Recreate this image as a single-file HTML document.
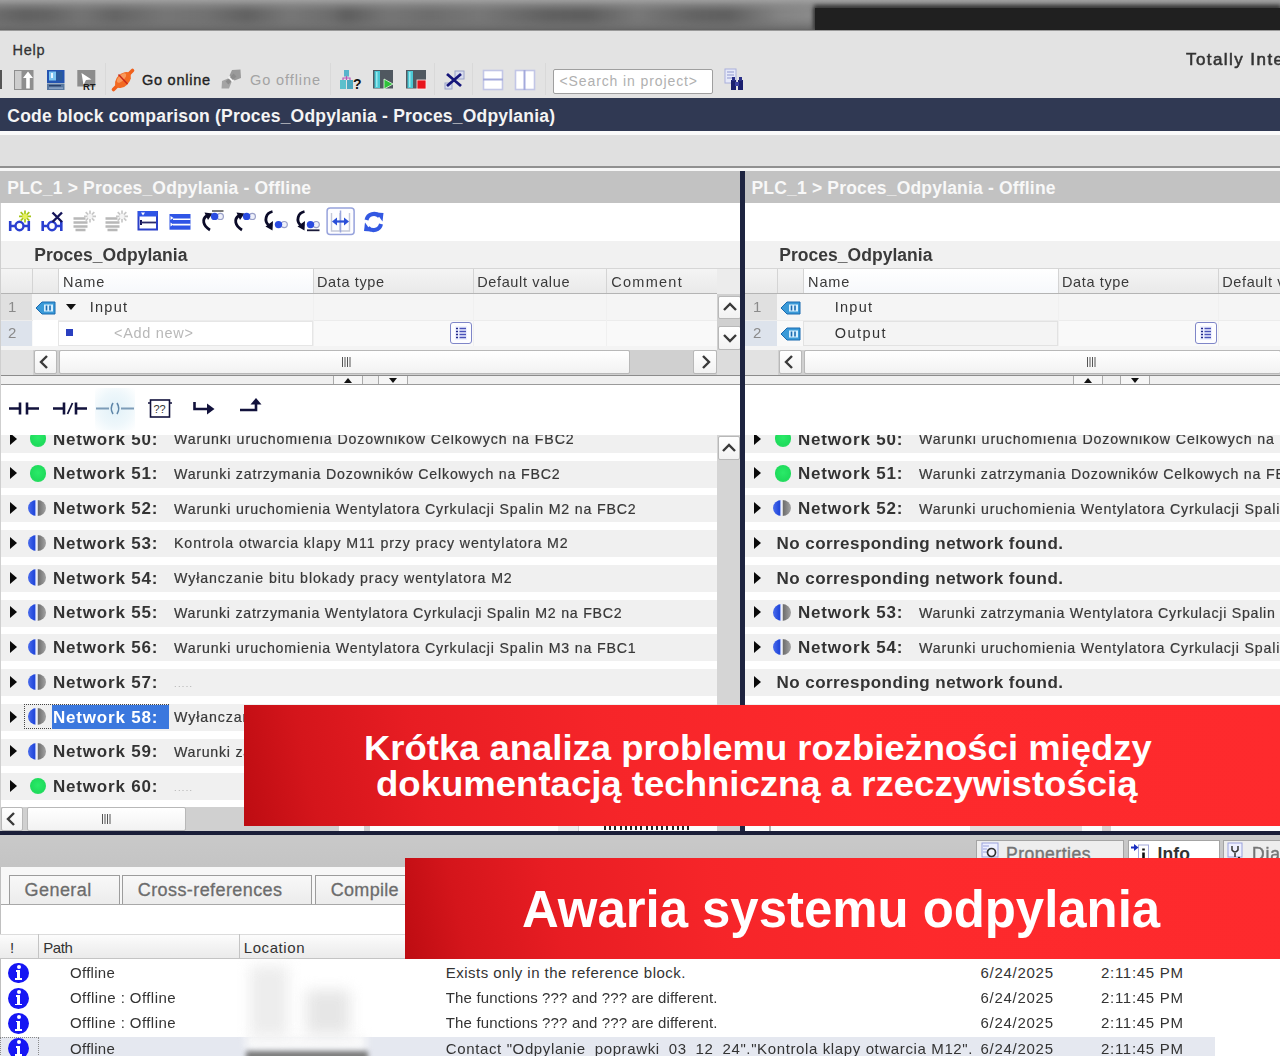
<!DOCTYPE html>
<html><head><meta charset="utf-8">
<style>
*{box-sizing:border-box;margin:0;padding:0}
html,body{width:1280px;height:1056px;overflow:hidden;background:#e4e4e4;font-family:"Liberation Sans",sans-serif;color:#2a2a2a}
.a{position:absolute}
.t{position:absolute;white-space:nowrap;line-height:1}
#root{position:relative;width:1280px;height:1056px;overflow:hidden}
.tk{-webkit-text-stroke:.3px currentColor}
svg{position:absolute;overflow:visible}
#ui{position:absolute;left:0;top:0;width:1280px;height:1056px;filter:blur(.5px)}
</style></head><body><div id="root"><div id="ui">
<div class="a" style="left:0px;top:0px;width:1280px;height:30.5px;background:linear-gradient(180deg,#a0a0a0 0,#8c8c8c 18%,#787878 40%,#727272 80%,#686868 94%,#565656 100%);"></div>
<div class="a" style="left:-10px;top:7px;width:830px;height:16px;filter:blur(5px);opacity:.8;background:linear-gradient(90deg,#6c6c6c 0,#5a5a5a 4%,#5e5e5e 7%,#747474 11%,#5e5e5e 15%,#767676 21%,#707070 26%,#5a5a5a 31%,#787878 36%,#6a6a6a 41%,#565656 43%,#767676 48%,#6a6a6a 53%,#787878 59%,#5a5a5a 67%,#565656 72%,#7a7a7a 78%,#5c5c5c 85%,#585858 89%,#888 95%,#949494 100%)"></div>
<div class="a" style="left:815px;top:8px;width:465px;height:22.5px;background:#202020;box-shadow:0 -2px 4px 1px #3a3a3a, -2px 0 3px 0 #555"></div>
<div class="a" style="left:0px;top:29.8px;width:1280px;height:1.4px;background:linear-gradient(180deg,#666,#cfcfcf);"></div>
<div class="a" style="left:0px;top:31px;width:1280px;height:67px;background:#e3e3e3;"></div>
<span class="t" style="left:12.5px;top:42.90px;font-size:14.5px;color:#333;letter-spacing:0.759px;-webkit-text-stroke:.3px #333;">Help</span>
<div class="a" style="left:0px;top:70px;width:1.5px;height:19px;background:#555;"></div>
<svg style="left:13px;top:68.5px" width="22" height="22" viewBox="0 0 22 22"><rect x="1" y="1" width="19.5" height="20" fill="#8e8e8e"/><rect x="2" y="2" width="6.5" height="18" fill="#cdcdcd"/><path d="M15 2.5 L20 9 H16.800 V19.5 H13.200 V9 H10 Z" fill="#fff"/></svg>
<svg style="left:45px;top:68.5px" width="22" height="22" viewBox="0 0 22 22"><rect x="2" y="1" width="17.5" height="13" fill="#2454b0"/><rect x="4" y="2.5" width="7" height="9" fill="#7cc4f0"/><rect x="11" y="2.5" width="6.5" height="9" fill="#2a5a9a"/><rect x="6" y="4" width="2" height="5" fill="#e8f6ff"/><rect x="2" y="14.5" width="17.5" height="6.5" fill="#5878a0"/><rect x="4" y="16" width="12" height="1.300" fill="#2a3f6a"/><rect x="4" y="18.5" width="14" height="1.200" fill="#9ab0d0"/></svg>
<svg style="left:76px;top:68.5px" width="22" height="22" viewBox="0 0 22 22"><rect x="1.300" y="1" width="18" height="16.5" fill="#8c8c8c"/><path d="M5.5 4 L15.5 10.5 L10 11 L7.5 16 Z" fill="#fff"/><text x="7" y="21" font-family="Liberation Sans" font-weight="bold" font-size="9.5" fill="#1a1a1a">RT</text></svg>
<div class="a" style="left:105px;top:63px;width:1px;height:32px;background:#d9d9d9;"></div>
<svg style="left:111.5px;top:68.5px" width="22" height="22" viewBox="0 0 22 22"><path d="M1.5 20.5 L20.5 1.5" stroke="#f0601c" stroke-width="3.6" stroke-linecap="round"/><ellipse cx="11" cy="11" rx="9.5" ry="6.200" transform="rotate(-45 11 11)" fill="#f26a22"/><ellipse cx="9.5" cy="9" rx="6" ry="2.800" transform="rotate(-45 9.5 9)" fill="#f99a5c"/><path d="M6.5 5.5 L15.5 15" stroke="#c8281a" stroke-width="1.5"/></svg>
<span class="t" style="left:142.0px;top:73.30px;font-size:14.5px;color:#222;letter-spacing:0.741px;-webkit-text-stroke:.35px #222;">Go online</span>
<svg style="left:220.5px;top:69px" width="20" height="20" viewBox="0 0 20 20"><path d="M19.5 0.5 L20 9 L13.5 11.5 L8.5 6.5 L11 1 Z" fill="#9a9a9a"/><path d="M0.5 19.5 L1 12 L7 9.5 L10.5 13 L8 19.5 Z" fill="#a4a4a4"/><path d="M6 14 L14 6" stroke="#8c8c8c" stroke-width="4"/><path d="M7.5 8 L12 12.5" stroke="#f4f4f4" stroke-width="1.800"/></svg>
<span class="t" style="left:250.0px;top:73.30px;font-size:14.5px;color:#a3a3a3;letter-spacing:0.911px;">Go offline</span>
<div class="a" style="left:330px;top:63px;width:1px;height:32px;background:#d9d9d9;"></div>
<svg style="left:339px;top:69px" width="24" height="22" viewBox="0 0 24 22"><rect x="5" y="1" width="5" height="6.5" fill="#58b4cc"/><rect x="1" y="11" width="6" height="9" fill="#5cc0cc"/><rect x="8" y="11" width="6" height="9" fill="#4aa8c0"/><path d="M7.5 7 V11 M4 11 V9 H11 V11" stroke="#b858b8" fill="none" stroke-width="1.2"/><text x="14" y="20" font-family="Liberation Sans" font-weight="bold" font-size="14" fill="#111">?</text></svg>
<svg style="left:372px;top:69px" width="24" height="22" viewBox="0 0 24 22"><rect x="1" y="1" width="20" height="18.5" fill="#505860"/><rect x="2.5" y="2" width="5.5" height="17" fill="#4cc8d4"/><rect x="4" y="3" width="1.5" height="15" fill="#9ae8ec"/><path d="M12 10 L21 15 L12 20 Z" fill="#2fc23a" stroke="#e8ffe8" stroke-width=".8"/></svg>
<svg style="left:405px;top:69px" width="24" height="22" viewBox="0 0 24 22"><rect x="1" y="1" width="20" height="18.5" fill="#505860"/><rect x="2.5" y="2" width="5.5" height="17" fill="#4cc8d4"/><rect x="4" y="3" width="1.5" height="15" fill="#9ae8ec"/><rect x="12" y="11" width="9" height="9" fill="#e8141c" stroke="#ffecec" stroke-width=".8"/></svg>
<div class="a" style="left:434px;top:63px;width:1px;height:32px;background:#d9d9d9;"></div>
<svg style="left:443px;top:69px" width="24" height="22" viewBox="0 0 24 22"><rect x="12" y="2" width="9" height="8" fill="#d8dcec" stroke="#9aa2c8"/><rect x="2" y="14" width="7" height="6" fill="#d8dcec" stroke="#9aa2c8"/><path d="M4 5 L18 17 M18 5 L4 17" stroke="#15157a" stroke-width="2.8"/></svg>
<div class="a" style="left:472px;top:63px;width:1px;height:32px;background:#d9d9d9;"></div>
<svg style="left:482px;top:69px" width="22" height="22" viewBox="0 0 22 22"><rect x="1.5" y="1.5" width="19" height="19" fill="#fff" stroke="#c2c6e6" stroke-width="1.6"/><path d="M1 10.5 H21" stroke="#a4aadc" stroke-width="2"/></svg>
<svg style="left:514px;top:69px" width="22" height="22" viewBox="0 0 22 22"><rect x="1.5" y="1.5" width="19" height="19" fill="#fff" stroke="#c2c6e6" stroke-width="1.6"/><path d="M10.5 1 V21" stroke="#a4aadc" stroke-width="2"/></svg>
<div class="a" style="left:545px;top:63px;width:1px;height:32px;background:#d9d9d9;"></div>
<div class="a" style="left:553px;top:69px;width:160px;height:25px;background:#fff;border:1px solid #9f9f9f;border-radius:2px"></div>
<span class="t" style="left:559.5px;top:74.00px;font-size:14px;color:#b0b0b0;letter-spacing:0.894px;">&lt;Search in project&gt;</span>
<svg style="left:722px;top:67px" width="26" height="26" viewBox="0 0 26 26"><rect x="3" y="2" width="11" height="14" fill="#e6e9f8" stroke="#aab0dc"/><path d="M5 5H12M5 8H12M5 11H12" stroke="#8f97cf"/><rect x="9" y="13" width="5" height="10" fill="#1a1f6e"/><rect x="16" y="13" width="5" height="10" fill="#1a1f6e"/><rect x="13" y="15" width="4" height="4" fill="#3a40a0"/><rect x="10" y="10" width="3" height="4" fill="#2a3088"/><rect x="17" y="10" width="3" height="4" fill="#2a3088"/></svg>
<span class="t" style="left:1186.0px;top:51.00px;font-size:17px;color:#333;letter-spacing:1.430px;-webkit-text-stroke:.55px #333;">Totally Inte</span>
<div class="a" style="left:0px;top:97.5px;width:1280px;height:33px;background:#303953;"></div>
<span class="t" style="left:7.3px;top:107.60px;font-size:17.5px;color:#f4f4f4;font-weight:bold;letter-spacing:0.204px;">Code block comparison (Proces_Odpylania - Proces_Odpylania)</span>
<div class="a" style="left:0px;top:130.5px;width:1280px;height:5px;background:#fafafa;"></div>
<div class="a" style="left:0px;top:135px;width:1280px;height:31px;background:#e0e0e0;"></div>
<div class="a" style="left:0px;top:166px;width:1280px;height:1.5px;background:#909090;"></div>
<div class="a" style="left:0px;top:167.5px;width:1280px;height:3.5px;background:#f6f6f6;"></div>
<div class="a" style="left:0px;top:171px;width:1280px;height:32px;background:#c2c2c2;"></div>
<span class="t" style="left:7.3px;top:180.30px;font-size:17.5px;color:#f8f8f8;font-weight:bold;letter-spacing:0.170px;">PLC_1 &gt; Proces_Odpylania - Offline</span>
<span class="t" style="left:751.5px;top:180.30px;font-size:17.5px;color:#f8f8f8;font-weight:bold;letter-spacing:0.179px;">PLC_1 &gt; Proces_Odpylania - Offline</span>
<div class="a" style="left:0px;top:203px;width:1280px;height:37.5px;background:#fff;"></div>
<svg style="left:0;top:203px" width="400" height="37" viewBox="0 203 400 37"><path d="M10.2 221 V231 M28.8 221 V231 M10 226 H15 M24 226 H29" stroke="#2a3fd0" stroke-width="2.6" fill="none"/><ellipse cx="19.5" cy="226" rx="4" ry="4.2" fill="none" stroke="#2a3fd0" stroke-width="2.4"/><path d="M25 210.4 V222.4 M19 216.4 H31 M20.68 212.08 L29.32 220.72 M20.68 220.72 L29.32 212.08" stroke="#a6c616" stroke-width="1.7"/><circle cx="25" cy="216.4" r="2.6" fill="#e6f05a"/><path d="M42.7 221 V231 M61.3 221 V231 M42.5 226 H47.5 M56.5 226 H61.5" stroke="#2a3fd0" stroke-width="2.6" fill="none"/><ellipse cx="52.0" cy="226" rx="4" ry="4.2" fill="none" stroke="#2a3fd0" stroke-width="2.4"/><path d="M52.5 212.5 L62 222 M62 212.5 L52.5 222" stroke="#14145a" stroke-width="2.4"/><path d="M73.5 218.5 H85.5 M73.5 222.5 H87.5 M73.5 226.5 H87.5 M75.5 230 H85.5" stroke="#b8b8b8" stroke-width="2.4"/><path d="M90.0 210.4 V222.4 M84.0 216.4 H96.0 M85.68 212.08 L94.32 220.72 M85.68 220.72 L94.32 212.08" stroke="#c8c8c8" stroke-width="1.7"/><circle cx="90.0" cy="216.4" r="2.6" fill="#f4f4f4"/><path d="M105.5 218.5 H117.5 M105.5 222.5 H119.5 M105.5 226.5 H119.5 M107.5 230 H117.5" stroke="#b8b8b8" stroke-width="2.4"/><path d="M122.0 210.4 V222.4 M116.0 216.4 H128.0 M117.68 212.08 L126.32 220.72 M117.68 220.72 L126.32 212.08" stroke="#c8c8c8" stroke-width="1.7"/><circle cx="122.0" cy="216.4" r="2.6" fill="#f4f4f4"/><rect x="138.5" y="212" width="18.5" height="17.5" fill="#fff" stroke="#2a3fc8" stroke-width="2"/><rect x="138" y="211" width="19.5" height="5.5" fill="#2f55e6"/><path d="M141 212.5 L145 212.5 L143 215.5 Z" fill="#fff"/><rect x="140" y="220" width="2" height="5" fill="#14145a"/><path d="M141 222.5 H156" stroke="#2a2a6a" stroke-width="1.8"/><rect x="169.5" y="214" width="21" height="15.7" fill="#2f55e6"/><path d="M173 219.3 H190.5 M173 224.6 H190.5" stroke="#fff" stroke-width="1.6"/><path d="M170.5 216 L173.5 218 L170.5 220 Z M170.5 222.5 L173.5 224.5 L170.5 226.5 Z" fill="#fff"/><path d="M210 230 C203 226 201.5 219 207 215.5" stroke="#0a0a28" stroke-width="2.8" fill="none"/><path d="M204.5 212.5 L212.5 213.5 L208 220 Z" fill="#0a0a28"/><circle cx="220.29999999999998" cy="216.4" r="3.1" fill="#eef0fa" stroke="#9aa0c8" stroke-width="1.2"/><circle cx="214.6" cy="216.4" r="3.7" fill="#2a4be0"/><path d="M212 211 H223.5" stroke="#555" stroke-width="1.6"/><path d="M242 230 C235 226 233.5 219 239 215.5" stroke="#0a0a28" stroke-width="2.8" fill="none"/><path d="M236.5 212.5 L244.5 213.5 L240 220 Z" fill="#0a0a28"/><circle cx="252.29999999999998" cy="216.4" r="3.1" fill="#eef0fa" stroke="#9aa0c8" stroke-width="1.2"/><circle cx="246.6" cy="216.4" r="3.7" fill="#2a4be0"/><path d="M272.5 211.5 C265.5 213 264.0 221 268.5 225" stroke="#0a0a28" stroke-width="2.8" fill="none"/><path d="M265.5 226.5 L273.0 221 L272.5 230.5 Z" fill="#0a0a28"/><circle cx="284.2" cy="224.6" r="3.1" fill="#eef0fa" stroke="#9aa0c8" stroke-width="1.2"/><circle cx="278.5" cy="224.6" r="3.7" fill="#2a4be0"/><path d="M304.5 211.5 C297.5 213 296.0 221 300.5 225" stroke="#0a0a28" stroke-width="2.8" fill="none"/><path d="M297.5 226.5 L305.0 221 L304.5 230.5 Z" fill="#0a0a28"/><circle cx="316.2" cy="224.6" r="3.1" fill="#eef0fa" stroke="#9aa0c8" stroke-width="1.2"/><circle cx="310.5" cy="224.6" r="3.7" fill="#2a4be0"/><path d="M307 230.300 H319.5" stroke="#1a1a3a" stroke-width="1.8"/><rect x="327.1" y="208.1" width="27" height="26.5" rx="3" fill="#fdfdff" stroke="#97a3dc" stroke-width="1.5"/><path d="M331.5 213 V231 H340 V213 M349.5 213 V231 H341" stroke="#c4c8d8" stroke-width="1.4" fill="none"/><path d="M340.5 210.5 V232.5" stroke="#9aa6dc" stroke-width="1.5"/><path d="M335 221.5 H346" stroke="#2a4fd8" stroke-width="2.2"/><path d="M332 221.5 L337 217.5 V225.5 Z M349 221.5 L344 217.5 V225.5 Z" fill="#2a4fd8"/><path d="M366.5 220 A7.5 7.5 0 0 1 379.5 216.5" stroke="#3358e2" stroke-width="4" fill="none"/><path d="M376 212.5 L383.5 213 L382.5 221.5 Z" fill="#3358e2"/><path d="M381 224 A7.5 7.5 0 0 1 368 227.5" stroke="#3358e2" stroke-width="4" fill="none"/><path d="M371.5 231.5 L364 231 L365 222.5 Z" fill="#3358e2"/></svg>
<div class="a" style="left:0px;top:240.5px;width:741px;height:28px;background:#f1f1f1;"></div>
<span class="t" style="left:34.3px;top:246.50px;font-size:17.5px;color:#3a3a3a;font-weight:bold;letter-spacing:0.026px;">Proces_Odpylania</span>
<div class="a" style="left:0px;top:268.5px;width:741px;height:25px;background:linear-gradient(180deg,#f4f4f4,#e9e9e9);"></div>
<div class="a" style="left:58px;top:268.5px;width:255px;height:25px;background:linear-gradient(180deg,#ffffff,#f6f8fb);"></div>
<div class="a" style="left:32px;top:268.5px;width:1px;height:25px;background:#d4d4d4;"></div>
<div class="a" style="left:57.5px;top:268.5px;width:1px;height:25px;background:#d4d4d4;"></div>
<div class="a" style="left:313px;top:268.5px;width:1px;height:25px;background:#d4d4d4;"></div>
<div class="a" style="left:472.5px;top:268.5px;width:1px;height:25px;background:#d4d4d4;"></div>
<div class="a" style="left:606px;top:268.5px;width:1px;height:25px;background:#d4d4d4;"></div>
<div class="a" style="left:716.5px;top:268.5px;width:1px;height:25px;background:#d4d4d4;"></div>
<div class="a" style="left:0px;top:268px;width:741px;height:1px;background:#d6d6d6;"></div>
<div class="a" style="left:0px;top:293px;width:741px;height:1.2px;background:#b4b4b4;"></div>
<span class="t" style="left:63.0px;top:275.10px;font-size:14.5px;color:#3a3a3a;letter-spacing:0.907px;">Name</span>
<span class="t" style="left:317.0px;top:275.10px;font-size:14.5px;color:#3a3a3a;letter-spacing:0.617px;">Data type</span>
<span class="t" style="left:477.2px;top:275.10px;font-size:14.5px;color:#3a3a3a;letter-spacing:0.639px;">Default value</span>
<span class="t" style="left:611.3px;top:275.10px;font-size:14.5px;color:#3a3a3a;letter-spacing:1.258px;">Comment</span>
<div class="a" style="left:0px;top:294px;width:741px;height:26px;background:#f5f5f5;"></div>
<div class="a" style="left:0px;top:320px;width:741px;height:26px;background:#f9f9f9;"></div>
<div class="a" style="left:0px;top:294px;width:32px;height:25.5px;background:#e0e0e0;"></div>
<div class="a" style="left:0px;top:320px;width:32px;height:26px;background:#dde3ec;"></div>
<div class="a" style="left:0px;top:319.5px;width:741px;height:1px;background:#ececec;"></div>
<div class="a" style="left:313px;top:294px;width:1px;height:52px;background:#f0f0f0;"></div>
<div class="a" style="left:472.5px;top:294px;width:1px;height:52px;background:#f0f0f0;"></div>
<div class="a" style="left:606px;top:294px;width:1px;height:52px;background:#f0f0f0;"></div>
<span class="t" style="left:8.0px;top:299.40px;font-size:15px;color:#8a8a8a;">1</span>
<span class="t" style="left:8.0px;top:325.40px;font-size:15px;color:#8a8a8a;">2</span>
<svg style="left:34.5px;top:301px" width="22" height="14" viewBox="0 0 22 14"><path d="M1 7 L7 1 H20 V13 H7 Z" fill="#3a9ad8" stroke="#1a6ab0" stroke-width="1"/><rect x="9" y="3.5" width="9" height="7" fill="#d8f0ff"/><path d="M11.5 4.5 V9.5 M15 4.5 V9.5" stroke="#1a6ab0" stroke-width="1.6"/></svg>
<div class="a" style="left:33px;top:320px;width:25px;height:26px;background:#fff;"></div>
<div class="a" style="left:58px;top:320.5px;width:255px;height:25px;background:#fff;border:1px solid #e6e6e6"></div>
<div class="a" style="left:65.5px;top:303.5px;width:0;height:0;border-top:6px solid #111;border-left:5.5px solid transparent;border-right:5.5px solid transparent"></div>
<span class="t" style="left:89.7px;top:300.40px;font-size:14.5px;color:#333;letter-spacing:1.262px;">Input</span>
<div class="a" style="left:66px;top:329px;width:7px;height:7px;background:#2a3fc0;"></div>
<span class="t" style="left:114.0px;top:326.40px;font-size:14.5px;color:#b8b8b8;letter-spacing:0.704px;">&lt;Add new&gt;</span>
<div class="a" style="left:449.5px;top:321.7px;width:22px;height:22px;background:#fdfdff;border:1.5px solid #7f86c8;border-radius:3px"></div><svg style="left:454.5px;top:325.7px" width="12" height="14" viewBox="0 0 12 14"><rect x="0" y="0" width="12" height="14" fill="#eef0ff"/><path d="M1 2.5H3M1 5.5H3M1 8.5H3M1 11.5H3" stroke="#22288a" stroke-width="1.6"/><path d="M4.5 2.5H11M4.5 5.5H11M4.5 8.5H11M4.5 11.5H11" stroke="#4a52b8" stroke-width="1.6"/></svg>
<div class="a" style="left:0px;top:346px;width:741px;height:3.5px;background:#f4f4f4;"></div>
<div class="a" style="left:0px;top:349.5px;width:741px;height:25px;background:#d0d0d0;"></div>
<div class="a" style="left:0px;top:349.5px;width:33px;height:25px;background:#e2e2e2;"></div>
<div class="a" style="left:34px;top:349.5px;width:23px;height:24.5px;background:linear-gradient(180deg,#fff,#f2f2f2);border:1px solid #b8b8b8;border-radius:2px"></div>
<svg style="left:34px;top:351px" width="22" height="22" viewBox="0 0 22 22"><path d="M13 5 L7 11 L13 17" stroke="#3a3a3a" stroke-width="2.4" fill="none"/></svg>
<div class="a" style="left:58.5px;top:349.5px;width:571px;height:24.5px;background:linear-gradient(180deg,#fff,#f2f2f2);border:1px solid #b8b8b8;border-radius:2px"></div>
<div class="a" style="left:693px;top:349.5px;width:23.5px;height:24.5px;background:linear-gradient(180deg,#fff,#f2f2f2);border:1px solid #b8b8b8;border-radius:2px"></div>
<svg style="left:694px;top:351px" width="22" height="22" viewBox="0 0 22 22"><path d="M9 5 L15 11 L9 17" stroke="#3a3a3a" stroke-width="2.4" fill="none"/></svg>
<div class="a" style="left:717px;top:349.5px;width:24px;height:25px;background:#dcdcdc;"></div>
<div class="a" style="left:717px;top:268.5px;width:24px;height:81px;background:#d0d0d0;"></div>
<div class="a" style="left:717px;top:268.5px;width:24px;height:25px;background:#ececec;"></div>
<div class="a" style="left:718px;top:295.5px;width:23px;height:23.5px;background:linear-gradient(180deg,#fff,#f2f2f2);border:1px solid #b8b8b8;border-radius:2px"></div>
<svg style="left:718.5px;top:296px" width="22" height="22" viewBox="0 0 22 22"><path d="M5 14 L11 8 L17 14" stroke="#3a3a3a" stroke-width="2.4" fill="none"/></svg>
<div class="a" style="left:718px;top:326px;width:23px;height:23.5px;background:linear-gradient(180deg,#fff,#f2f2f2);border:1px solid #b8b8b8;border-radius:2px"></div>
<svg style="left:718.5px;top:327px" width="22" height="22" viewBox="0 0 22 22"><path d="M5 8 L11 14 L17 8" stroke="#3a3a3a" stroke-width="2.4" fill="none"/></svg>
<svg style="left:342px;top:357px" width="8" height="10" viewBox="0 0 8 10"><path d="M.5 0V10M3 0V10M5.5 0V10M8 0V10" stroke="#555" stroke-width="1"/></svg>
<div class="a" style="left:0px;top:374.5px;width:741px;height:1.5px;background:#8c8c8c;"></div>
<div class="a" style="left:0px;top:376px;width:741px;height:7.5px;background:#f0f0f0;"></div>
<div class="a" style="left:0px;top:383.5px;width:741px;height:1px;background:#9a9a9a;"></div>
<div class="a" style="left:333px;top:376px;width:30px;height:7.5px;background:#f6f6f6;border-left:1px solid #aaa;border-right:1px solid #aaa"></div>
<div class="a" style="left:344px;top:377.5px;width:0;height:0;border-bottom:5px solid #111;border-left:4.5px solid transparent;border-right:4.5px solid transparent"></div>
<div class="a" style="left:377.5px;top:376px;width:30px;height:7.5px;background:#f6f6f6;border-left:1px solid #aaa;border-right:1px solid #aaa"></div>
<div class="a" style="left:388.5px;top:378px;width:0;height:0;border-top:5px solid #111;border-left:4.5px solid transparent;border-right:4.5px solid transparent"></div>
<div class="a" style="left:0px;top:384.5px;width:741px;height:50px;background:#fff;"></div>
<div class="a" style="left:745px;top:240.5px;width:535px;height:28px;background:#f1f1f1;"></div>
<span class="t" style="left:779.3px;top:246.50px;font-size:17.5px;color:#3a3a3a;font-weight:bold;letter-spacing:0.026px;">Proces_Odpylania</span>
<div class="a" style="left:745px;top:268.5px;width:535px;height:25px;background:linear-gradient(180deg,#f4f4f4,#e9e9e9);"></div>
<div class="a" style="left:803px;top:268.5px;width:255px;height:25px;background:linear-gradient(180deg,#ffffff,#f6f8fb);"></div>
<div class="a" style="left:777px;top:268.5px;width:1px;height:25px;background:#d4d4d4;"></div>
<div class="a" style="left:802.5px;top:268.5px;width:1px;height:25px;background:#d4d4d4;"></div>
<div class="a" style="left:1058px;top:268.5px;width:1px;height:25px;background:#d4d4d4;"></div>
<div class="a" style="left:1217.5px;top:268.5px;width:1px;height:25px;background:#d4d4d4;"></div>
<div class="a" style="left:1351px;top:268.5px;width:1px;height:25px;background:#d4d4d4;"></div>
<div class="a" style="left:1461.5px;top:268.5px;width:1px;height:25px;background:#d4d4d4;"></div>
<div class="a" style="left:745px;top:268px;width:535px;height:1px;background:#d6d6d6;"></div>
<div class="a" style="left:745px;top:293px;width:535px;height:1.2px;background:#b4b4b4;"></div>
<span class="t" style="left:808.0px;top:275.10px;font-size:14.5px;color:#3a3a3a;letter-spacing:0.907px;">Name</span>
<span class="t" style="left:1062.0px;top:275.10px;font-size:14.5px;color:#3a3a3a;letter-spacing:0.617px;">Data type</span>
<span class="t" style="left:1222.2px;top:275.10px;font-size:14.5px;color:#3a3a3a;letter-spacing:0.639px;">Default value</span>
<div class="a" style="left:745px;top:294px;width:535px;height:26px;background:#f5f5f5;"></div>
<div class="a" style="left:745px;top:320px;width:535px;height:26px;background:#f9f9f9;"></div>
<div class="a" style="left:745px;top:294px;width:32px;height:25.5px;background:#e0e0e0;"></div>
<div class="a" style="left:745px;top:320px;width:32px;height:26px;background:#dde3ec;"></div>
<div class="a" style="left:745px;top:319.5px;width:535px;height:1px;background:#ececec;"></div>
<div class="a" style="left:1058px;top:294px;width:1px;height:52px;background:#f0f0f0;"></div>
<div class="a" style="left:1217.5px;top:294px;width:1px;height:52px;background:#f0f0f0;"></div>
<div class="a" style="left:1351px;top:294px;width:1px;height:52px;background:#f0f0f0;"></div>
<span class="t" style="left:753.0px;top:299.40px;font-size:15px;color:#8a8a8a;">1</span>
<span class="t" style="left:753.0px;top:325.40px;font-size:15px;color:#8a8a8a;">2</span>
<svg style="left:779.5px;top:301px" width="22" height="14" viewBox="0 0 22 14"><path d="M1 7 L7 1 H20 V13 H7 Z" fill="#3a9ad8" stroke="#1a6ab0" stroke-width="1"/><rect x="9" y="3.5" width="9" height="7" fill="#d8f0ff"/><path d="M11.5 4.5 V9.5 M15 4.5 V9.5" stroke="#1a6ab0" stroke-width="1.6"/></svg>
<svg style="left:779.5px;top:327px" width="22" height="14" viewBox="0 0 22 14"><path d="M1 7 L7 1 H20 V13 H7 Z" fill="#3a9ad8" stroke="#1a6ab0" stroke-width="1"/><rect x="9" y="3.5" width="9" height="7" fill="#d8f0ff"/><path d="M11.5 4.5 V9.5 M15 4.5 V9.5" stroke="#1a6ab0" stroke-width="1.6"/></svg>
<div class="a" style="left:803px;top:320.5px;width:255px;height:25px;background:#f4f4f4;border:1px solid #e2e2e2"></div>
<span class="t" style="left:834.7px;top:300.40px;font-size:14.5px;color:#333;letter-spacing:1.262px;">Input</span>
<span class="t" style="left:834.7px;top:326.40px;font-size:14.5px;color:#333;letter-spacing:1.454px;">Output</span>
<div class="a" style="left:1194.5px;top:321.7px;width:22px;height:22px;background:#fdfdff;border:1.5px solid #7f86c8;border-radius:3px"></div><svg style="left:1199.5px;top:325.7px" width="12" height="14" viewBox="0 0 12 14"><rect x="0" y="0" width="12" height="14" fill="#eef0ff"/><path d="M1 2.5H3M1 5.5H3M1 8.5H3M1 11.5H3" stroke="#22288a" stroke-width="1.6"/><path d="M4.5 2.5H11M4.5 5.5H11M4.5 8.5H11M4.5 11.5H11" stroke="#4a52b8" stroke-width="1.6"/></svg>
<div class="a" style="left:745px;top:346px;width:535px;height:3.5px;background:#f4f4f4;"></div>
<div class="a" style="left:745px;top:349.5px;width:535px;height:25px;background:#d0d0d0;"></div>
<div class="a" style="left:745px;top:349.5px;width:33px;height:25px;background:#e2e2e2;"></div>
<div class="a" style="left:779px;top:349.5px;width:23px;height:24.5px;background:linear-gradient(180deg,#fff,#f2f2f2);border:1px solid #b8b8b8;border-radius:2px"></div>
<svg style="left:779px;top:351px" width="22" height="22" viewBox="0 0 22 22"><path d="M13 5 L7 11 L13 17" stroke="#3a3a3a" stroke-width="2.4" fill="none"/></svg>
<div class="a" style="left:803.5px;top:349.5px;width:477px;height:24.5px;background:linear-gradient(180deg,#fff,#f2f2f2);border:1px solid #b8b8b8;border-radius:2px"></div>
<svg style="left:1087px;top:357px" width="8" height="10" viewBox="0 0 8 10"><path d="M.5 0V10M3 0V10M5.5 0V10M8 0V10" stroke="#555" stroke-width="1"/></svg>
<div class="a" style="left:745px;top:374.5px;width:535px;height:1.5px;background:#8c8c8c;"></div>
<div class="a" style="left:745px;top:376px;width:535px;height:7.5px;background:#f0f0f0;"></div>
<div class="a" style="left:745px;top:383.5px;width:535px;height:1px;background:#9a9a9a;"></div>
<div class="a" style="left:1073px;top:376px;width:30px;height:7.5px;background:#f6f6f6;border-left:1px solid #aaa;border-right:1px solid #aaa"></div>
<div class="a" style="left:1084px;top:377.5px;width:0;height:0;border-bottom:5px solid #111;border-left:4.5px solid transparent;border-right:4.5px solid transparent"></div>
<div class="a" style="left:1119.5px;top:376px;width:30px;height:7.5px;background:#f6f6f6;border-left:1px solid #aaa;border-right:1px solid #aaa"></div>
<div class="a" style="left:1130.5px;top:378px;width:0;height:0;border-top:5px solid #111;border-left:4.5px solid transparent;border-right:4.5px solid transparent"></div>
<div class="a" style="left:745px;top:384.5px;width:535px;height:50px;background:#fff;"></div>
<div class="a" style="left:95px;top:388px;width:40px;height:42px;background:radial-gradient(ellipse at center,#e2f1f8 0,#eef7fb 55%,#fff 100%);"></div>
<svg style="left:9px;top:399px" width="30" height="20" viewBox="0 0 30 20"><path d="M0 9.5 H10 M19 9.5 H30" stroke="#12123c" stroke-width="2.4"/><path d="M11 3.5 V15.5 M18 3.5 V15.5" stroke="#12123c" stroke-width="2.6"/></svg>
<svg style="left:53px;top:399px" width="35" height="20" viewBox="0 0 35 20"><path d="M0 9.5 H10 M24 9.5 H34" stroke="#12123c" stroke-width="2.4"/><path d="M11 3.5 V15.5 M23 3.5 V15.5" stroke="#12123c" stroke-width="2.6"/><path d="M14.5 15 L19.5 4" stroke="#12123c" stroke-width="1.8"/></svg>
<svg style="left:96px;top:399px" width="38" height="20" viewBox="0 0 38 20"><path d="M0 9.5 H13 M25 9.5 H38" stroke="#7d9cb8" stroke-width="2"/><path d="M17 4 Q13.5 9.5 17 15 M21 4 Q24.5 9.5 21 15" stroke="#5f86a8" stroke-width="1.6" fill="none"/></svg>
<svg style="left:148px;top:398px" width="25" height="21" viewBox="0 0 25 21"><rect x="2.5" y="2" width="19" height="17" fill="#fff" stroke="#12123c" stroke-width="1.6"/><path d="M0 5 H3 M21 5 H24" stroke="#12123c" stroke-width="1.6"/><text x="5.5" y="15" font-family="Liberation Sans" font-size="11" fill="#333">??</text></svg>
<svg style="left:193px;top:401px" width="23" height="14" viewBox="0 0 23 14"><path d="M1.5 1 V8 H16" stroke="#12123c" stroke-width="2.6" fill="none"/><path d="M14 2.5 L21.5 8 L14 13.5 Z" fill="#12123c"/></svg>
<svg style="left:239px;top:397px" width="24" height="16" viewBox="0 0 24 16"><path d="M1 13 H17 V6" stroke="#12123c" stroke-width="2.6" fill="none"/><path d="M11.5 7.5 L17 1 L22.5 7.5 Z" fill="#12123c"/></svg>
<div class="a" style="left:0;top:435px;width:717px;height:373px;overflow:hidden;background:#fff"><div class="a" style="left:0;top:-435px;width:717px;height:1056px">
<div class="a" style="left:1px;top:425.75px;width:716px;height:27px;background:#f0f0f0;"></div>
<div class="a" style="left:9.5px;top:432.55px;width:0;height:0;border-left:7.6px solid #0a0a0a;border-top:6.4px solid transparent;border-bottom:6.4px solid transparent"></div>
<div class="a" style="left:29.5px;top:430.45px;width:16.5px;height:16.5px;border-radius:50%;background:radial-gradient(circle at 50% 45%,#2aea68 0,#1fdc5c 60%,#3ddc70 100%)"></div>
<span class="t" style="left:53.0px;top:430.65px;font-size:17px;color:#333;font-weight:bold;letter-spacing:0.813px;">Network 50:</span>
<span class="t" style="left:174.0px;top:432.15px;font-size:14.2px;color:#383838;letter-spacing:0.896px;-webkit-text-stroke:.2px #383838;">Warunki uruchomienia Dozowników Celkowych na FBC2</span>
<div class="a" style="left:1px;top:460.50px;width:716px;height:27px;background:#f0f0f0;"></div>
<div class="a" style="left:9.5px;top:467.3px;width:0;height:0;border-left:7.6px solid #0a0a0a;border-top:6.4px solid transparent;border-bottom:6.4px solid transparent"></div>
<div class="a" style="left:29.5px;top:465.2px;width:16.5px;height:16.5px;border-radius:50%;background:radial-gradient(circle at 50% 45%,#2aea68 0,#1fdc5c 60%,#3ddc70 100%)"></div>
<span class="t" style="left:53.0px;top:465.40px;font-size:17px;color:#333;font-weight:bold;letter-spacing:0.813px;">Network 51:</span>
<span class="t" style="left:174.0px;top:466.90px;font-size:14.2px;color:#383838;letter-spacing:0.802px;-webkit-text-stroke:.2px #383838;">Warunki zatrzymania Dozowników Celkowych na FBC2</span>
<div class="a" style="left:1px;top:495.25px;width:716px;height:27px;background:#f0f0f0;"></div>
<div class="a" style="left:9.5px;top:502.05px;width:0;height:0;border-left:7.6px solid #0a0a0a;border-top:6.4px solid transparent;border-bottom:6.4px solid transparent"></div>
<div class="a" style="left:28px;top:499.95px;width:18px;height:16.5px;border-radius:50%;background:linear-gradient(90deg,#4a6cec 0,#2046da 36%,#dfe6ff 45%,#fff 51%,#6e6e6e 57%,#a4a4a4 100%)"></div>
<span class="t" style="left:53.0px;top:500.15px;font-size:17px;color:#333;font-weight:bold;letter-spacing:0.813px;">Network 52:</span>
<span class="t" style="left:174.0px;top:501.65px;font-size:14.2px;color:#383838;letter-spacing:0.821px;-webkit-text-stroke:.2px #383838;">Warunki uruchomienia Wentylatora Cyrkulacji Spalin M2 na FBC2</span>
<div class="a" style="left:1px;top:530.00px;width:716px;height:27px;background:#f0f0f0;"></div>
<div class="a" style="left:9.5px;top:536.8px;width:0;height:0;border-left:7.6px solid #0a0a0a;border-top:6.4px solid transparent;border-bottom:6.4px solid transparent"></div>
<div class="a" style="left:28px;top:534.7px;width:18px;height:16.5px;border-radius:50%;background:linear-gradient(90deg,#4a6cec 0,#2046da 36%,#dfe6ff 45%,#fff 51%,#6e6e6e 57%,#a4a4a4 100%)"></div>
<span class="t" style="left:53.0px;top:534.90px;font-size:17px;color:#333;font-weight:bold;letter-spacing:0.813px;">Network 53:</span>
<span class="t" style="left:174.0px;top:536.40px;font-size:14.2px;color:#383838;letter-spacing:0.904px;-webkit-text-stroke:.2px #383838;">Kontrola otwarcia klapy M11 przy pracy wentylatora M2</span>
<div class="a" style="left:1px;top:564.75px;width:716px;height:27px;background:#f0f0f0;"></div>
<div class="a" style="left:9.5px;top:571.55px;width:0;height:0;border-left:7.6px solid #0a0a0a;border-top:6.4px solid transparent;border-bottom:6.4px solid transparent"></div>
<div class="a" style="left:28px;top:569.45px;width:18px;height:16.5px;border-radius:50%;background:linear-gradient(90deg,#4a6cec 0,#2046da 36%,#dfe6ff 45%,#fff 51%,#6e6e6e 57%,#a4a4a4 100%)"></div>
<span class="t" style="left:53.0px;top:569.65px;font-size:17px;color:#333;font-weight:bold;letter-spacing:0.813px;">Network 54:</span>
<span class="t" style="left:174.0px;top:571.15px;font-size:14.2px;color:#383838;letter-spacing:0.886px;-webkit-text-stroke:.2px #383838;">Wyłanczanie bitu blokady pracy wentylatora M2</span>
<div class="a" style="left:1px;top:599.50px;width:716px;height:27px;background:#f0f0f0;"></div>
<div class="a" style="left:9.5px;top:606.3px;width:0;height:0;border-left:7.6px solid #0a0a0a;border-top:6.4px solid transparent;border-bottom:6.4px solid transparent"></div>
<div class="a" style="left:28px;top:604.2px;width:18px;height:16.5px;border-radius:50%;background:linear-gradient(90deg,#4a6cec 0,#2046da 36%,#dfe6ff 45%,#fff 51%,#6e6e6e 57%,#a4a4a4 100%)"></div>
<span class="t" style="left:53.0px;top:604.40px;font-size:17px;color:#333;font-weight:bold;letter-spacing:0.813px;">Network 55:</span>
<span class="t" style="left:174.0px;top:605.90px;font-size:14.2px;color:#383838;letter-spacing:0.745px;-webkit-text-stroke:.2px #383838;">Warunki zatrzymania Wentylatora Cyrkulacji Spalin M2 na FBC2</span>
<div class="a" style="left:1px;top:634.25px;width:716px;height:27px;background:#f0f0f0;"></div>
<div class="a" style="left:9.5px;top:641.05px;width:0;height:0;border-left:7.6px solid #0a0a0a;border-top:6.4px solid transparent;border-bottom:6.4px solid transparent"></div>
<div class="a" style="left:28px;top:638.95px;width:18px;height:16.5px;border-radius:50%;background:linear-gradient(90deg,#4a6cec 0,#2046da 36%,#dfe6ff 45%,#fff 51%,#6e6e6e 57%,#a4a4a4 100%)"></div>
<span class="t" style="left:53.0px;top:639.15px;font-size:17px;color:#333;font-weight:bold;letter-spacing:0.813px;">Network 56:</span>
<span class="t" style="left:174.0px;top:640.65px;font-size:14.2px;color:#383838;letter-spacing:0.821px;-webkit-text-stroke:.2px #383838;">Warunki uruchomienia Wentylatora Cyrkulacji Spalin M3 na FBC1</span>
<div class="a" style="left:1px;top:669.00px;width:716px;height:27px;background:#f0f0f0;"></div>
<div class="a" style="left:9.5px;top:675.8px;width:0;height:0;border-left:7.6px solid #0a0a0a;border-top:6.4px solid transparent;border-bottom:6.4px solid transparent"></div>
<div class="a" style="left:28px;top:673.7px;width:18px;height:16.5px;border-radius:50%;background:linear-gradient(90deg,#4a6cec 0,#2046da 36%,#dfe6ff 45%,#fff 51%,#6e6e6e 57%,#a4a4a4 100%)"></div>
<span class="t" style="left:53.0px;top:673.90px;font-size:17px;color:#333;font-weight:bold;letter-spacing:0.813px;">Network 57:</span>
<span class="t" style="left:174.0px;top:679.90px;font-size:9px;color:#aaa;letter-spacing:1.375px;">.....</span>
<div class="a" style="left:1px;top:703.75px;width:716px;height:27px;background:#f0f0f0;"></div>
<div class="a" style="left:9.5px;top:710.55px;width:0;height:0;border-left:7.6px solid #0a0a0a;border-top:6.4px solid transparent;border-bottom:6.4px solid transparent"></div>
<div class="a" style="left:28px;top:708.45px;width:18px;height:16.5px;border-radius:50%;background:linear-gradient(90deg,#4a6cec 0,#2046da 36%,#dfe6ff 45%,#fff 51%,#6e6e6e 57%,#a4a4a4 100%)"></div>
<div class="a" style="left:24px;top:704.25px;width:145px;height:25px;background:transparent;border:1px dotted #444"></div>
<div class="a" style="left:52px;top:704.75px;width:116.5px;height:24px;background:#3b78de;"></div>
<span class="t" style="left:53.0px;top:708.65px;font-size:17px;color:#fff;font-weight:bold;letter-spacing:0.813px;">Network 58:</span>
<span class="t" style="left:174.0px;top:710.15px;font-size:14.2px;color:#383838;letter-spacing:0.886px;-webkit-text-stroke:.2px #383838;">Wyłanczanie bitu blokady pracy wentylatora M2</span>
<div class="a" style="left:1px;top:738.50px;width:716px;height:27px;background:#f0f0f0;"></div>
<div class="a" style="left:9.5px;top:745.3px;width:0;height:0;border-left:7.6px solid #0a0a0a;border-top:6.4px solid transparent;border-bottom:6.4px solid transparent"></div>
<div class="a" style="left:28px;top:743.2px;width:18px;height:16.5px;border-radius:50%;background:linear-gradient(90deg,#4a6cec 0,#2046da 36%,#dfe6ff 45%,#fff 51%,#6e6e6e 57%,#a4a4a4 100%)"></div>
<span class="t" style="left:53.0px;top:743.40px;font-size:17px;color:#333;font-weight:bold;letter-spacing:0.813px;">Network 59:</span>
<span class="t" style="left:174.0px;top:744.90px;font-size:14.2px;color:#383838;letter-spacing:0.745px;-webkit-text-stroke:.2px #383838;">Warunki zatrzymania Wentylatora Cyrkulacji Spalin M3 na FBC1</span>
<div class="a" style="left:1px;top:773.25px;width:716px;height:27px;background:#f0f0f0;"></div>
<div class="a" style="left:9.5px;top:780.05px;width:0;height:0;border-left:7.6px solid #0a0a0a;border-top:6.4px solid transparent;border-bottom:6.4px solid transparent"></div>
<div class="a" style="left:29.5px;top:777.95px;width:16.5px;height:16.5px;border-radius:50%;background:radial-gradient(circle at 50% 45%,#2aea68 0,#1fdc5c 60%,#3ddc70 100%)"></div>
<span class="t" style="left:53.0px;top:778.15px;font-size:17px;color:#333;font-weight:bold;letter-spacing:0.813px;">Network 60:</span>
<span class="t" style="left:174.0px;top:784.15px;font-size:9px;color:#aaa;letter-spacing:1.375px;">.....</span>
</div></div>
<div class="a" style="left:0px;top:203px;width:1px;height:605px;background:#cfcfcf;"></div>
<div class="a" style="left:717px;top:435px;width:24px;height:373px;background:#d5d5d5;"></div>
<div class="a" style="left:717.5px;top:435.5px;width:22.5px;height:24px;background:linear-gradient(180deg,#fff,#f2f2f2);border:1px solid #b8b8b8;border-radius:2px"></div>
<svg style="left:718px;top:436.5px" width="22" height="22" viewBox="0 0 22 22"><path d="M5 14 L11 8 L17 14" stroke="#3a3a3a" stroke-width="2.4" fill="none"/></svg>
<div class="a" style="left:745px;top:435px;width:535px;height:373px;overflow:hidden;background:#fff"><div class="a" style="left:-745px;top:-435px;width:1280px;height:1056px">
<div class="a" style="left:745px;top:425.75px;width:535px;height:27px;background:#f0f0f0;"></div>
<div class="a" style="left:753.5px;top:432.55px;width:0;height:0;border-left:7.6px solid #0a0a0a;border-top:6.4px solid transparent;border-bottom:6.4px solid transparent"></div>
<div class="a" style="left:774.5px;top:430.45px;width:16.5px;height:16.5px;border-radius:50%;background:radial-gradient(circle at 50% 45%,#2aea68 0,#1fdc5c 60%,#3ddc70 100%)"></div>
<span class="t" style="left:798.0px;top:430.65px;font-size:17px;color:#333;font-weight:bold;letter-spacing:0.813px;">Network 50:</span>
<span class="t" style="left:919.0px;top:432.15px;font-size:14.2px;color:#383838;letter-spacing:0.896px;-webkit-text-stroke:.2px #383838;">Warunki uruchomienia Dozowników Celkowych na FBC2</span>
<div class="a" style="left:745px;top:460.50px;width:535px;height:27px;background:#f0f0f0;"></div>
<div class="a" style="left:753.5px;top:467.3px;width:0;height:0;border-left:7.6px solid #0a0a0a;border-top:6.4px solid transparent;border-bottom:6.4px solid transparent"></div>
<div class="a" style="left:774.5px;top:465.2px;width:16.5px;height:16.5px;border-radius:50%;background:radial-gradient(circle at 50% 45%,#2aea68 0,#1fdc5c 60%,#3ddc70 100%)"></div>
<span class="t" style="left:798.0px;top:465.40px;font-size:17px;color:#333;font-weight:bold;letter-spacing:0.813px;">Network 51:</span>
<span class="t" style="left:919.0px;top:466.90px;font-size:14.2px;color:#383838;letter-spacing:0.802px;-webkit-text-stroke:.2px #383838;">Warunki zatrzymania Dozowników Celkowych na FBC2</span>
<div class="a" style="left:745px;top:495.25px;width:535px;height:27px;background:#f0f0f0;"></div>
<div class="a" style="left:753.5px;top:502.05px;width:0;height:0;border-left:7.6px solid #0a0a0a;border-top:6.4px solid transparent;border-bottom:6.4px solid transparent"></div>
<div class="a" style="left:773px;top:499.95px;width:18px;height:16.5px;border-radius:50%;background:linear-gradient(90deg,#4a6cec 0,#2046da 36%,#dfe6ff 45%,#fff 51%,#6e6e6e 57%,#a4a4a4 100%)"></div>
<span class="t" style="left:798.0px;top:500.15px;font-size:17px;color:#333;font-weight:bold;letter-spacing:0.813px;">Network 52:</span>
<span class="t" style="left:919.0px;top:501.65px;font-size:14.2px;color:#383838;letter-spacing:0.821px;-webkit-text-stroke:.2px #383838;">Warunki uruchomienia Wentylatora Cyrkulacji Spalin M2 na FBC2</span>
<div class="a" style="left:745px;top:530.00px;width:535px;height:27px;background:#f0f0f0;"></div>
<div class="a" style="left:753.5px;top:536.8px;width:0;height:0;border-left:7.6px solid #0a0a0a;border-top:6.4px solid transparent;border-bottom:6.4px solid transparent"></div>
<span class="t" style="left:776.5px;top:534.90px;font-size:17px;color:#333;font-weight:bold;letter-spacing:0.452px;">No corresponding network found.</span>
<div class="a" style="left:745px;top:564.75px;width:535px;height:27px;background:#f0f0f0;"></div>
<div class="a" style="left:753.5px;top:571.55px;width:0;height:0;border-left:7.6px solid #0a0a0a;border-top:6.4px solid transparent;border-bottom:6.4px solid transparent"></div>
<span class="t" style="left:776.5px;top:569.65px;font-size:17px;color:#333;font-weight:bold;letter-spacing:0.452px;">No corresponding network found.</span>
<div class="a" style="left:745px;top:599.50px;width:535px;height:27px;background:#f0f0f0;"></div>
<div class="a" style="left:753.5px;top:606.3px;width:0;height:0;border-left:7.6px solid #0a0a0a;border-top:6.4px solid transparent;border-bottom:6.4px solid transparent"></div>
<div class="a" style="left:773px;top:604.2px;width:18px;height:16.5px;border-radius:50%;background:linear-gradient(90deg,#4a6cec 0,#2046da 36%,#dfe6ff 45%,#fff 51%,#6e6e6e 57%,#a4a4a4 100%)"></div>
<span class="t" style="left:798.0px;top:604.40px;font-size:17px;color:#333;font-weight:bold;letter-spacing:0.813px;">Network 53:</span>
<span class="t" style="left:919.0px;top:605.90px;font-size:14.2px;color:#383838;letter-spacing:0.745px;-webkit-text-stroke:.2px #383838;">Warunki zatrzymania Wentylatora Cyrkulacji Spalin M2 na FBC2</span>
<div class="a" style="left:745px;top:634.25px;width:535px;height:27px;background:#f0f0f0;"></div>
<div class="a" style="left:753.5px;top:641.05px;width:0;height:0;border-left:7.6px solid #0a0a0a;border-top:6.4px solid transparent;border-bottom:6.4px solid transparent"></div>
<div class="a" style="left:773px;top:638.95px;width:18px;height:16.5px;border-radius:50%;background:linear-gradient(90deg,#4a6cec 0,#2046da 36%,#dfe6ff 45%,#fff 51%,#6e6e6e 57%,#a4a4a4 100%)"></div>
<span class="t" style="left:798.0px;top:639.15px;font-size:17px;color:#333;font-weight:bold;letter-spacing:0.813px;">Network 54:</span>
<span class="t" style="left:919.0px;top:640.65px;font-size:14.2px;color:#383838;letter-spacing:0.821px;-webkit-text-stroke:.2px #383838;">Warunki uruchomienia Wentylatora Cyrkulacji Spalin M3 na FBC1</span>
<div class="a" style="left:745px;top:669.00px;width:535px;height:27px;background:#f0f0f0;"></div>
<div class="a" style="left:753.5px;top:675.8px;width:0;height:0;border-left:7.6px solid #0a0a0a;border-top:6.4px solid transparent;border-bottom:6.4px solid transparent"></div>
<span class="t" style="left:776.5px;top:673.90px;font-size:17px;color:#333;font-weight:bold;letter-spacing:0.452px;">No corresponding network found.</span>
<div class="a" style="left:745px;top:703.75px;width:535px;height:27px;background:#f0f0f0;"></div>
<div class="a" style="left:753.5px;top:710.55px;width:0;height:0;border-left:7.6px solid #0a0a0a;border-top:6.4px solid transparent;border-bottom:6.4px solid transparent"></div>
<div class="a" style="left:773px;top:708.45px;width:18px;height:16.5px;border-radius:50%;background:linear-gradient(90deg,#4a6cec 0,#2046da 36%,#dfe6ff 45%,#fff 51%,#6e6e6e 57%,#a4a4a4 100%)"></div>
<span class="t" style="left:798.0px;top:708.65px;font-size:17px;color:#333;font-weight:bold;letter-spacing:0.813px;">Network 55:</span>
<div class="a" style="left:745px;top:738.50px;width:535px;height:27px;background:#f0f0f0;"></div>
<div class="a" style="left:753.5px;top:745.3px;width:0;height:0;border-left:7.6px solid #0a0a0a;border-top:6.4px solid transparent;border-bottom:6.4px solid transparent"></div>
<div class="a" style="left:773px;top:743.2px;width:18px;height:16.5px;border-radius:50%;background:linear-gradient(90deg,#4a6cec 0,#2046da 36%,#dfe6ff 45%,#fff 51%,#6e6e6e 57%,#a4a4a4 100%)"></div>
<span class="t" style="left:798.0px;top:743.40px;font-size:17px;color:#333;font-weight:bold;letter-spacing:0.813px;">Network 56:</span>
<div class="a" style="left:745px;top:773.25px;width:535px;height:27px;background:#f0f0f0;"></div>
<div class="a" style="left:753.5px;top:780.05px;width:0;height:0;border-left:7.6px solid #0a0a0a;border-top:6.4px solid transparent;border-bottom:6.4px solid transparent"></div>
<div class="a" style="left:774.5px;top:777.95px;width:16.5px;height:16.5px;border-radius:50%;background:radial-gradient(circle at 50% 45%,#2aea68 0,#1fdc5c 60%,#3ddc70 100%)"></div>
<span class="t" style="left:798.0px;top:778.15px;font-size:17px;color:#333;font-weight:bold;letter-spacing:0.813px;">Network 57:</span>
</div></div>
<div class="a" style="left:0px;top:807px;width:741px;height:24px;background:#d0d0d0;"></div>
<div class="a" style="left:0.5px;top:807px;width:22.5px;height:23.5px;background:linear-gradient(180deg,#fff,#f2f2f2);border:1px solid #b8b8b8;border-radius:2px"></div>
<svg style="left:1px;top:808px" width="22" height="22" viewBox="0 0 22 22"><path d="M13 5 L7 11 L13 17" stroke="#3a3a3a" stroke-width="2.4" fill="none"/></svg>
<div class="a" style="left:26.5px;top:807px;width:159px;height:23.5px;background:linear-gradient(180deg,#fff,#f2f2f2);border:1px solid #b8b8b8;border-radius:2px"></div>
<svg style="left:102px;top:814px" width="8" height="10" viewBox="0 0 8 10"><path d="M.5 0V10M3 0V10M5.5 0V10M8 0V10" stroke="#555" stroke-width="1"/></svg>
<div class="a" style="left:745px;top:807.5px;width:535px;height:23.5px;background:#d0d0d0;"></div>
<div class="a" style="left:836px;top:808px;width:360px;height:22px;background:linear-gradient(180deg,#fff,#f2f2f2);border:1px solid #b8b8b8;border-radius:2px"></div>
<div class="a" style="left:244px;top:825.5px;width:97px;height:5.5px;background:#d0d0d0;"></div>
<div class="a" style="left:339px;top:825.5px;width:24.5px;height:5.5px;background:#fbfbfb;"></div>
<div class="a" style="left:370px;top:825.5px;width:188px;height:5.5px;background:#fdfdfd;"></div>
<div class="a" style="left:558px;top:825.5px;width:20px;height:5.5px;background:#ededed;"></div>
<div class="a" style="left:579px;top:825.5px;width:138px;height:5.5px;background:#fdfdfd;"></div>
<div class="a" style="left:604px;top:826px;width:88px;height:3.5px;background:repeating-linear-gradient(90deg,#222 0,#222 2px,#fdfdfd 2px,#fdfdfd 5.2px);"></div>
<div class="a" style="left:717px;top:825.5px;width:24px;height:5.5px;background:#cfcfcf;"></div>
<div class="a" style="left:745px;top:825.5px;width:535px;height:5.5px;background:#fdfdfd;"></div>
<div class="a" style="left:769px;top:825.5px;width:1.5px;height:5.5px;background:#b0b0b0;"></div>
<div class="a" style="left:970px;top:825.5px;width:112px;height:5.5px;background:#e4dcdc;"></div>
<div class="a" style="left:1102px;top:825.5px;width:9px;height:5.5px;background:#d8d0d0;"></div>
<div class="a" style="left:740px;top:171px;width:4.5px;height:660px;background:#1e2440;"></div>
<div class="a" style="left:0px;top:830.7px;width:1280px;height:4.6px;background:#1a1e38;"></div>
<div class="a" style="left:0px;top:835.3px;width:1280px;height:31.6px;background:linear-gradient(180deg,#c9c9c9,#c4c4c4);"></div>
<div class="a" style="left:0px;top:866.9px;width:1280px;height:37.6px;background:#f7f7f7;"></div>
<div class="a" style="left:976px;top:839.5px;width:148px;height:30px;background:#eeeeee;border:1px solid #a4a4a4"></div>
<span class="t" style="left:1006.0px;top:846.30px;font-size:17.5px;color:#747474;letter-spacing:0.526px;-webkit-text-stroke:.4px #747474;">Properties</span>
<svg style="left:981px;top:842px" width="19" height="18" viewBox="0 0 19 18"><rect x="1" y="1" width="16" height="14" fill="#eef0ff" stroke="#9aa2dc"/><path d="M2 4H8M2 7H6M2 10H6" stroke="#9aa2dc"/><circle cx="10.5" cy="10.5" r="4" fill="#f4f4ff" stroke="#333" stroke-width="1.7"/></svg>
<div class="a" style="left:1127.5px;top:839.5px;width:92.5px;height:30px;background:#fff;border:1px solid #a4a4a4"></div>
<span class="t" style="left:1157.5px;top:846.30px;font-size:17.5px;color:#333;font-weight:bold;letter-spacing:0.143px;">Info</span>
<svg style="left:1130px;top:842px" width="20" height="18" viewBox="0 0 20 18"><rect x="8.5" y="3" width="10" height="15" fill="#fff" stroke="#a4aadc"/><path d="M13.5 6.5 V8.5 M13.5 10.5 V16" stroke="#111" stroke-width="2.6"/><path d="M1 5.5 H5" stroke="#1a2fc0" stroke-width="2"/><path d="M4 2 L8.5 5.5 L4 9 Z" fill="#1a2fc0"/></svg>
<div class="a" style="left:1222.5px;top:839.5px;width:70px;height:30px;background:#eeeeee;border:1px solid #a4a4a4"></div>
<span class="t" style="left:1252.0px;top:846.30px;font-size:17.5px;color:#747474;letter-spacing:0.870px;-webkit-text-stroke:.4px #747474;">Dia</span>
<svg style="left:1227px;top:842px" width="18" height="18" viewBox="0 0 18 18"><rect x="1" y="1" width="14" height="14" fill="#eef0ff" stroke="#9aa2dc"/><path d="M5 4 V8 Q8 12 11 8 V4 M8 11 V15" stroke="#333" stroke-width="1.5" fill="none"/><circle cx="12" cy="16" r="1.200" fill="#222"/></svg>
<div class="a" style="left:8.5px;top:875px;width:111.5px;height:29px;background:linear-gradient(180deg,#f8f8f8,#ececec);border:1px solid #9c9c9c;border-bottom:none"></div>
<span class="t" style="left:24.6px;top:880.50px;font-size:18px;color:#6c6c6c;letter-spacing:0.427px;-webkit-text-stroke:.3px #6c6c6c;">General</span>
<div class="a" style="left:122px;top:875px;width:190px;height:29px;background:linear-gradient(180deg,#f8f8f8,#ececec);border:1px solid #9c9c9c;border-bottom:none"></div>
<span class="t" style="left:137.8px;top:880.50px;font-size:18px;color:#6c6c6c;letter-spacing:0.410px;-webkit-text-stroke:.3px #6c6c6c;">Cross-references</span>
<div class="a" style="left:315px;top:875px;width:130px;height:29px;background:linear-gradient(180deg,#f8f8f8,#ececec);border:1px solid #9c9c9c;border-bottom:none"></div>
<span class="t" style="left:330.7px;top:880.50px;font-size:18px;color:#6c6c6c;letter-spacing:0.312px;-webkit-text-stroke:.3px #6c6c6c;">Compile</span>
<div class="a" style="left:0px;top:903.5px;width:1280px;height:1.5px;background:#a8a8a8;"></div>
<div class="a" style="left:0px;top:905px;width:1280px;height:151px;background:#fff;"></div>
<div class="a" style="left:0px;top:867px;width:1.2px;height:189px;background:#c0c0c0;"></div>
<div class="a" style="left:0px;top:934px;width:1280px;height:24px;background:linear-gradient(180deg,#fdfdfd 0,#f4f4f4 45%,#ebebeb 100%);"></div>
<div class="a" style="left:0px;top:933.5px;width:1280px;height:1px;background:#dcdcdc;"></div>
<div class="a" style="left:0px;top:958px;width:1280px;height:1px;background:#c4c4c4;"></div>
<div class="a" style="left:37.5px;top:934px;width:1px;height:24px;background:#c4c4c4;"></div>
<div class="a" style="left:238.5px;top:934px;width:1px;height:24px;background:#c4c4c4;"></div>
<span class="t" style="left:10.0px;top:940.30px;font-size:15px;color:#333;">!</span>
<span class="t" style="left:43.3px;top:940.30px;font-size:15px;color:#333;letter-spacing:-0.453px;">Path</span>
<span class="t" style="left:243.8px;top:940.30px;font-size:15px;color:#333;letter-spacing:0.570px;">Location</span>
<div class="a" style="left:0px;top:1037px;width:1215px;height:20px;background:#e5e8f0;"></div>
<div class="a" style="left:0px;top:1037px;width:38.5px;height:20px;background:transparent;border:1px dotted #8a8a8a"></div>
<div class="a" style="left:8.2px;top:962.6px;width:20.8px;height:20.8px;border-radius:50%;background:#1616f4"></div>
<div class="a" style="left:17.2px;top:970.2px;width:3px;height:9.8px;background:#fff;"></div>
<div class="a" style="left:15.6px;top:970.2px;width:3.5px;height:1.8px;background:#fff;"></div>
<div class="a" style="left:15.4px;top:978.4px;width:6.6px;height:1.8px;background:#fff;"></div>
<div class="a" style="left:16.5px;top:964.6px;width:4.2px;height:4.2px;border-radius:50%;background:#fff"></div>
<span class="t" style="left:70.0px;top:965.00px;font-size:15px;color:#333;letter-spacing:0.286px;">Offline</span>
<span class="t" style="left:445.8px;top:965.00px;font-size:15px;color:#333;letter-spacing:0.475px;">Exists only in the reference block.</span>
<span class="t" style="left:980.5px;top:965.00px;font-size:15px;color:#333;letter-spacing:0.721px;">6/24/2025</span>
<span class="t" style="left:1101.0px;top:965.00px;font-size:15px;color:#333;letter-spacing:0.711px;">2:11:45 PM</span>
<div class="a" style="left:8.2px;top:987.8px;width:20.8px;height:20.8px;border-radius:50%;background:#1616f4"></div>
<div class="a" style="left:17.2px;top:995.4px;width:3px;height:9.8px;background:#fff;"></div>
<div class="a" style="left:15.6px;top:995.4px;width:3.5px;height:1.8px;background:#fff;"></div>
<div class="a" style="left:15.4px;top:1003.6px;width:6.6px;height:1.8px;background:#fff;"></div>
<div class="a" style="left:16.5px;top:989.8px;width:4.2px;height:4.2px;border-radius:50%;background:#fff"></div>
<span class="t" style="left:70.0px;top:990.20px;font-size:15px;color:#333;letter-spacing:0.427px;">Offline : Offline</span>
<span class="t" style="left:445.8px;top:990.20px;font-size:15px;color:#333;letter-spacing:0.150px;">The functions ??? and ??? are different.</span>
<span class="t" style="left:980.5px;top:990.20px;font-size:15px;color:#333;letter-spacing:0.721px;">6/24/2025</span>
<span class="t" style="left:1101.0px;top:990.20px;font-size:15px;color:#333;letter-spacing:0.711px;">2:11:45 PM</span>
<div class="a" style="left:8.2px;top:1013.0px;width:20.8px;height:20.8px;border-radius:50%;background:#1616f4"></div>
<div class="a" style="left:17.2px;top:1020.6px;width:3px;height:9.8px;background:#fff;"></div>
<div class="a" style="left:15.6px;top:1020.6px;width:3.5px;height:1.8px;background:#fff;"></div>
<div class="a" style="left:15.4px;top:1028.8px;width:6.6px;height:1.8px;background:#fff;"></div>
<div class="a" style="left:16.5px;top:1015.0px;width:4.2px;height:4.2px;border-radius:50%;background:#fff"></div>
<span class="t" style="left:70.0px;top:1015.40px;font-size:15px;color:#333;letter-spacing:0.427px;">Offline : Offline</span>
<span class="t" style="left:445.8px;top:1015.40px;font-size:15px;color:#333;letter-spacing:0.150px;">The functions ??? and ??? are different.</span>
<span class="t" style="left:980.5px;top:1015.40px;font-size:15px;color:#333;letter-spacing:0.721px;">6/24/2025</span>
<span class="t" style="left:1101.0px;top:1015.40px;font-size:15px;color:#333;letter-spacing:0.711px;">2:11:45 PM</span>
<div class="a" style="left:8.2px;top:1038.2px;width:20.8px;height:20.8px;border-radius:50%;background:#1616f4"></div>
<div class="a" style="left:17.2px;top:1045.8px;width:3px;height:9.8px;background:#fff;"></div>
<div class="a" style="left:15.6px;top:1045.8px;width:3.5px;height:1.8px;background:#fff;"></div>
<div class="a" style="left:15.4px;top:1054.0px;width:6.6px;height:1.8px;background:#fff;"></div>
<div class="a" style="left:16.5px;top:1040.2px;width:4.2px;height:4.2px;border-radius:50%;background:#fff"></div>
<span class="t" style="left:70.0px;top:1040.60px;font-size:15px;color:#333;letter-spacing:0.286px;">Offline</span>
<span class="t" style="left:445.8px;top:1040.60px;font-size:15px;color:#333;letter-spacing:0.623px;">Contact &quot;Odpylanie_poprawki_03_12_24&quot;.&quot;Kontrola klapy otwarcia M12&quot;.</span>
<span class="t" style="left:980.5px;top:1040.60px;font-size:15px;color:#333;letter-spacing:0.721px;">6/24/2025</span>
<span class="t" style="left:1101.0px;top:1040.60px;font-size:15px;color:#333;letter-spacing:0.711px;">2:11:45 PM</span>
<div class="a" style="left:246px;top:1034px;width:120px;height:16px;filter:blur(4px);background:#fafafa"></div>
<div class="a" style="left:250px;top:966px;width:38px;height:70px;filter:blur(7px);background:#ebebeb;opacity:.9"></div>
<div class="a" style="left:306px;top:990px;width:44px;height:44px;filter:blur(7px);background:#e4e4e4;opacity:.9"></div>
<div class="a" style="left:246px;top:1050.5px;width:122px;height:10px;filter:blur(2.5px);background:#7c7c7c"></div>
</div>
<div class="a" style="left:244.3px;top:705px;width:1036px;height:120.8px;background:linear-gradient(78deg,#bd0c12 0,#d4151b 7%,#e81d23 18%,#f62529 36%,#fd292c 58%,#fe2a2d 100%);"></div>
<span class="t" style="left:363.7px;top:730.50px;font-size:34.5px;color:#fff;font-weight:bold;transform-origin:0 0;transform:scaleX(1.0562);">Krótka analiza problemu rozbieżności między</span>
<span class="t" style="left:376.0px;top:767.00px;font-size:34.5px;color:#fff;font-weight:bold;transform-origin:0 0;transform:scaleX(1.0591);">dokumentacją techniczną a rzeczywistością</span>
<div class="a" style="left:404.6px;top:857.6px;width:876px;height:101px;background:linear-gradient(78deg,#bd0c12 0,#d4151b 7%,#e81d23 18%,#f62529 36%,#fd292c 58%,#fe2a2d 100%);"></div>
<span class="t" style="left:522.4px;top:884.00px;font-size:51px;color:#fff;font-weight:bold;transform-origin:0 0;transform:scaleX(0.9976);">Awaria systemu odpylania</span>
</div></body></html>
